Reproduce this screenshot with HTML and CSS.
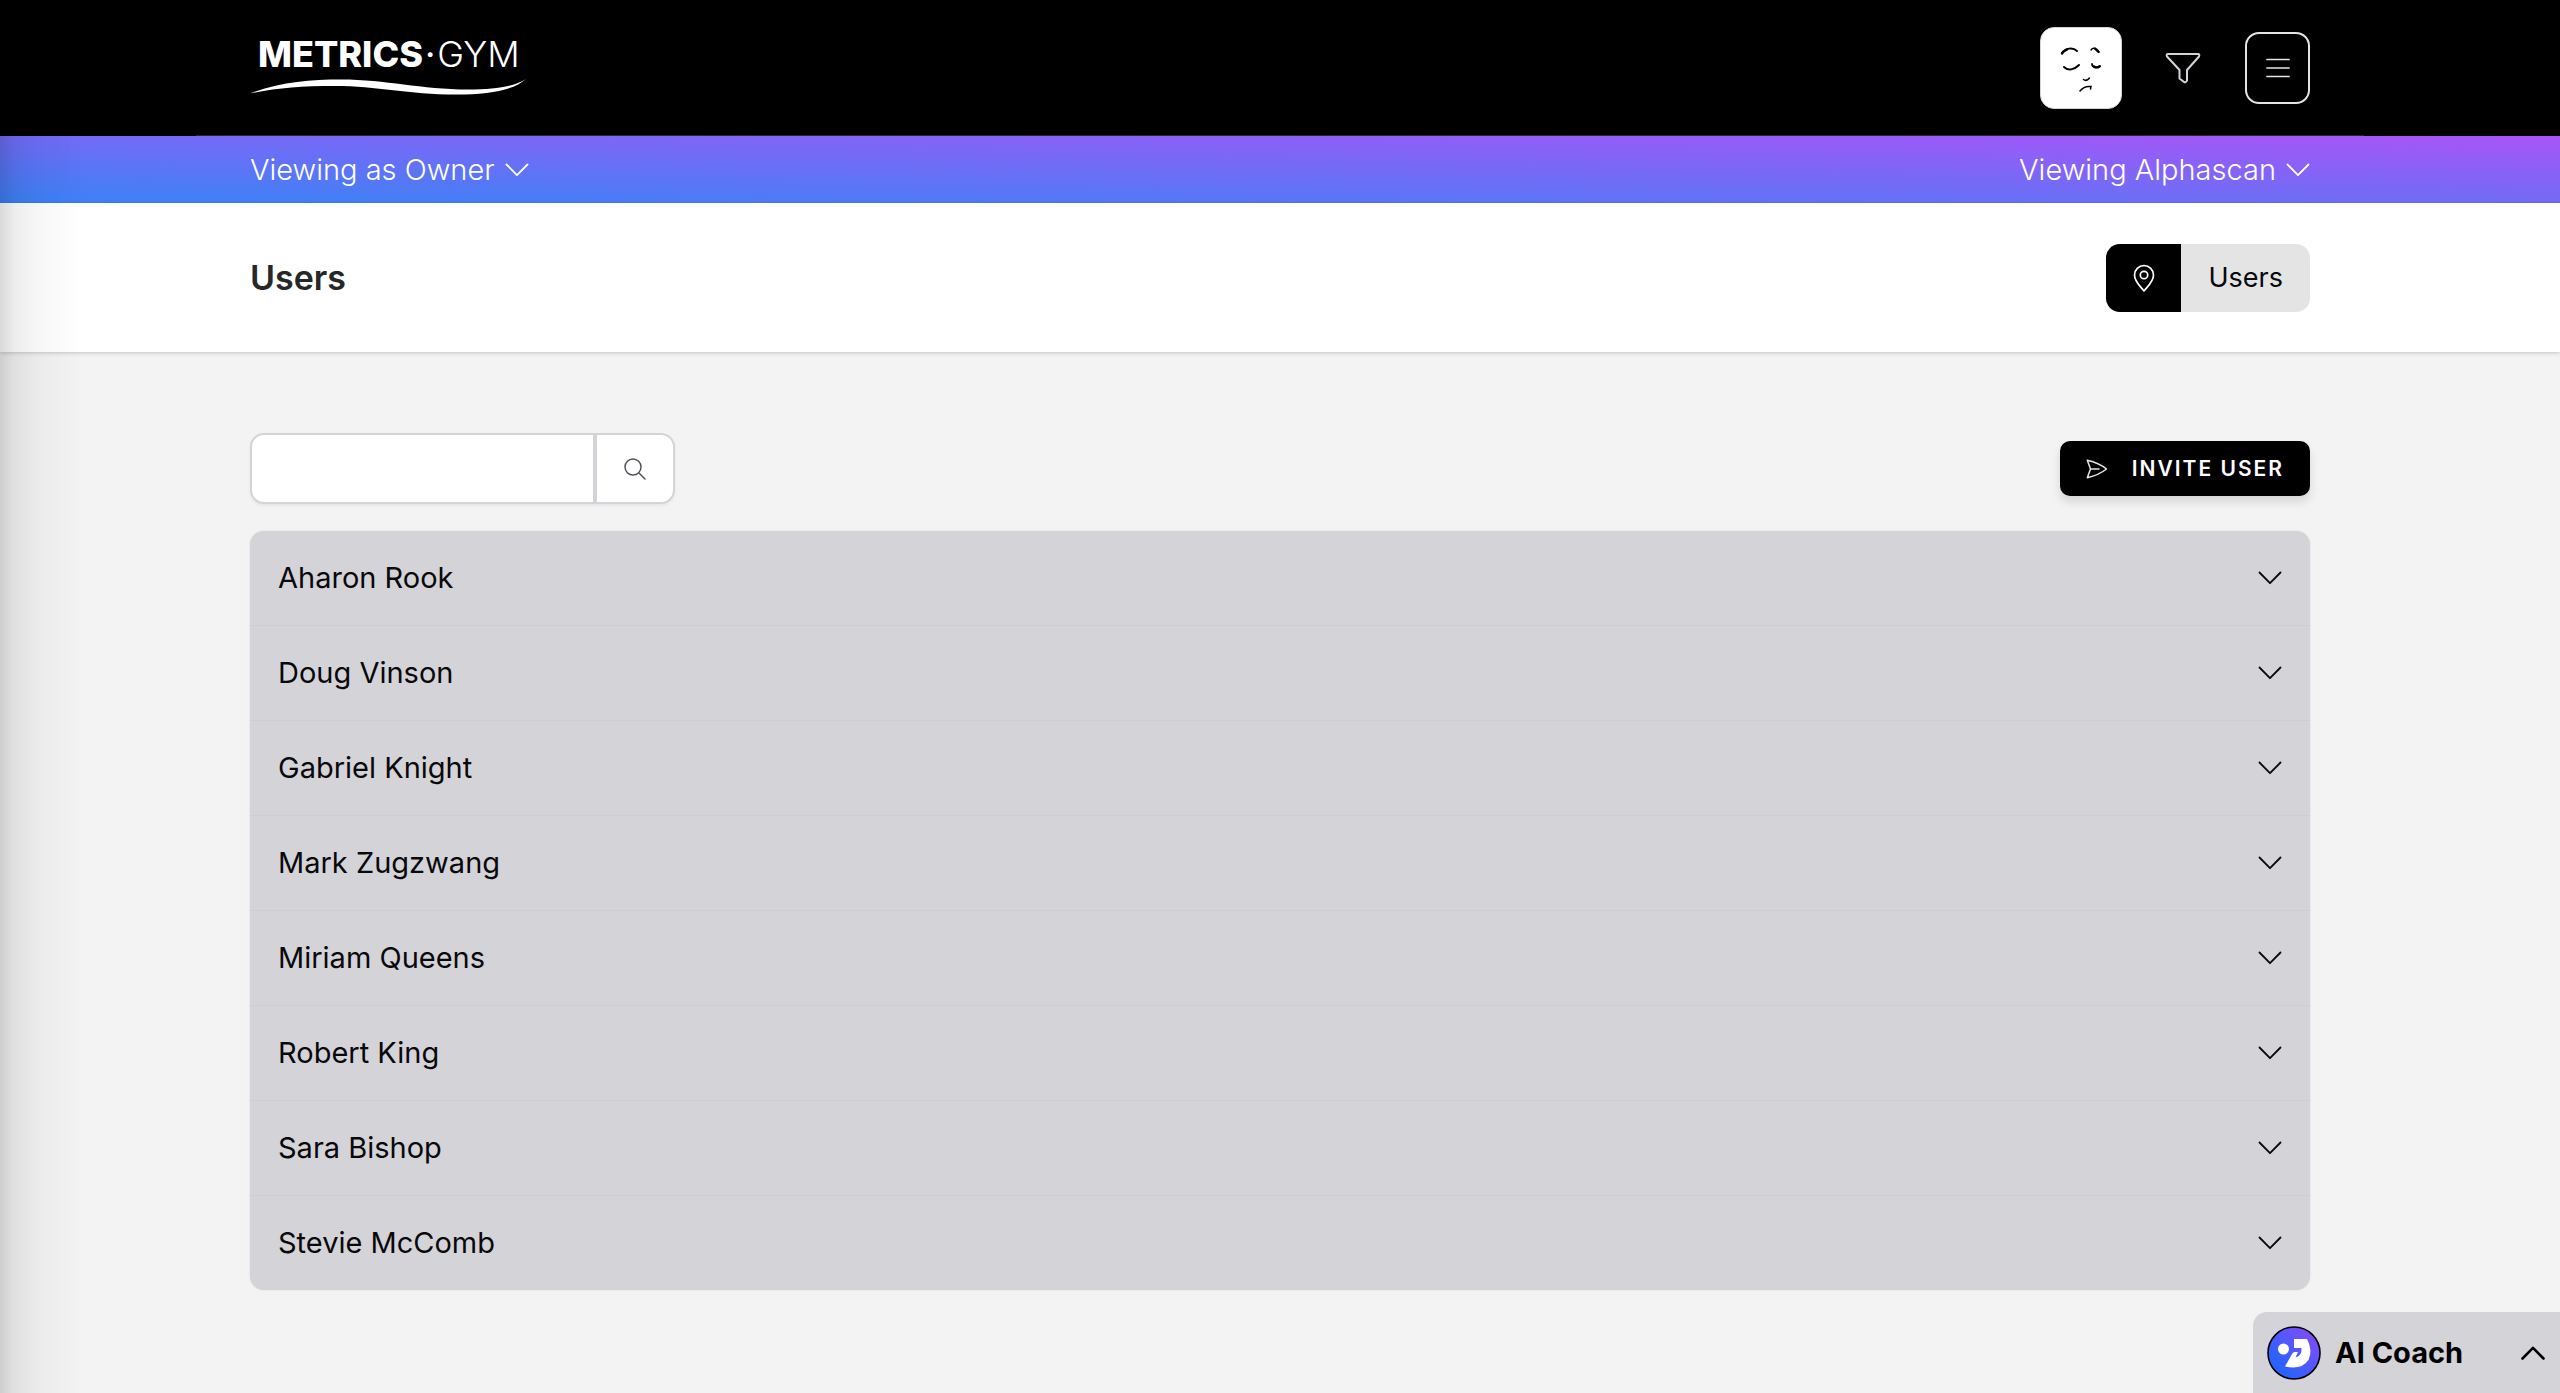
FILE: index.html
```html
<!DOCTYPE html>
<html lang="en">
<head>
<meta charset="utf-8">
<meta name="viewport" content="width=device-width, initial-scale=1">
<title>Users</title>
<link rel="stylesheet" href="styles.css">
</head>
<body>
<svg class="defs" width="0" height="0" aria-hidden="true">
  <symbol id="chevron" viewBox="0 0 24 14"><path d="M1.5 1.5 12 12.2 22.5 1.5" fill="none" stroke="currentColor" stroke-linecap="round" stroke-linejoin="round"/></symbol>
</svg>
<header class="topbar">
  <nav class="container nav" aria-label="Main">
    <a class="logo" href="#">
      <span class="logo-text"><b>METRICS</b><span class="logo-dot">·</span><span class="logo-gym">GYM</span></span>
      <svg class="swoosh" viewBox="0 0 276 18" aria-hidden="true"><path d="M0 15.500C30 4 60 1.500 91 1.500c45 0 80 10 127 10 28 0 46-3 58-10.500-12 11-36 15.500-70 15.500C158 16.500 127 8 85 8 50 8 27 10 0 15.500Z" fill="#fff"/></svg>
    </a>
    <div class="nav-actions">
      <button class="avatar" type="button" aria-label="Profile">
        <svg viewBox="0 0 80 80" fill="none" stroke="#000" stroke-linecap="round" aria-hidden="true">
          <path d="M21 25c3-5 11-6 15-2" stroke-width="1.8"/><path d="M21 25.500c1-2 3-3 5-4" stroke-width="2.400"/>
          <path d="M50 22c2-3 6-2 8 2" stroke-width="1.4"/><path d="M54 20.500 57.500 24" stroke-width="2.200"/>
          <path d="M23 39c4 4 10 3 15-2" stroke-width="2"/><path d="M51 36c0 4 6 4 8 2" stroke-width="1.800"/><path d="M53 38.500c2 1.500 4 1 5.500 0" stroke-width="2.200"/>
          <path d="M42.500 51.500c2 1.500 4 1 6-1.500" stroke-width="1.500"/>
          <path d="M39 63c3-4 7-5 11-4.500l-.5 2.500" stroke-width="1.500"/>
        </svg>
      </button>
      <button class="filter" type="button" aria-label="Filter">
        <svg viewBox="0 0 36 32" fill="none" stroke="#d4d4d8" stroke-width="2" stroke-linejoin="round" aria-hidden="true"><path d="M3 2H33Q35 2 34 4.500L22 18V28.500Q21 31 19 30L14.500 26.500V18L2 4.500Q1 2 3 2Z"/></svg>
      </button>
      <button class="menu" type="button" aria-label="Menu">
        <svg viewBox="0 0 24 20" stroke="#e4e4e7" stroke-width="1.700" stroke-linecap="round" aria-hidden="true"><path d="M1 1.500H23M1 10H23M1 18.500H23"/></svg>
      </button>
    </div>
  </nav>
</header>
<div class="context">
  <div class="container context-row">
    <button class="switcher" type="button">Viewing as Owner <svg class="chev" aria-hidden="true"><use href="#chevron"/></svg></button>
    <button class="switcher" type="button">Viewing Alphascan <svg class="chev" aria-hidden="true"><use href="#chevron"/></svg></button>
  </div>
</div>
<div class="page-head">
  <div class="container page-head-row">
    <h1>Users</h1>
    <nav class="crumbs" aria-label="Breadcrumb">
      <span class="pin"><svg viewBox="0 0 22 28" fill="none" stroke="#fff" stroke-width="1.700" stroke-linejoin="round" aria-hidden="true"><circle cx="11" cy="11" r="3.700"/><path d="M20.500 11C20.500 17.500 15 22 11 27 7 22 1.500 17.500 1.500 11a9.500 9.500 0 0 1 19 0Z"/></svg></span>
      <a href="#">Users</a>
    </nav>
  </div>
</div>
<main class="container">
  <div class="tools">
    <form class="search" role="search">
      <input type="search" aria-label="Search users">
      <button type="button" aria-label="Search"><svg viewBox="0 0 22 22" fill="none" stroke="#52525b" stroke-width="1.500" stroke-linecap="round" aria-hidden="true"><circle cx="9" cy="9" r="8"/><path d="m15 15 6 6"/></svg></button>
    </form>
    <button class="invite" type="button"><svg viewBox="0 0 22 20" fill="none" stroke="#e4e4e7" stroke-width="1.500" stroke-linejoin="round" stroke-linecap="round" aria-hidden="true"><path d="M4.500 10 1.300 1.300Q13 4 20.500 10 13 16 1.300 18.700L4.500 10H13"/></svg>INVITE USER</button>
  </div>
  <ul class="users">
    <li><button type="button">Aharon Rook <svg class="chev" aria-hidden="true"><use href="#chevron"/></svg></button></li>
    <li><button type="button">Doug Vinson <svg class="chev" aria-hidden="true"><use href="#chevron"/></svg></button></li>
    <li><button type="button">Gabriel Knight <svg class="chev" aria-hidden="true"><use href="#chevron"/></svg></button></li>
    <li><button type="button">Mark Zugzwang <svg class="chev" aria-hidden="true"><use href="#chevron"/></svg></button></li>
    <li><button type="button">Miriam Queens <svg class="chev" aria-hidden="true"><use href="#chevron"/></svg></button></li>
    <li><button type="button">Robert King <svg class="chev" aria-hidden="true"><use href="#chevron"/></svg></button></li>
    <li><button type="button">Sara Bishop <svg class="chev" aria-hidden="true"><use href="#chevron"/></svg></button></li>
    <li><button type="button">Stevie McComb <svg class="chev" aria-hidden="true"><use href="#chevron"/></svg></button></li>
  </ul>
</main>
<button class="coach" type="button">
  <svg class="coach-logo" viewBox="0 0 54 54" aria-hidden="true">
    <defs><linearGradient id="cg" x1="0" y1="1" x2="1" y2="0"><stop offset=".2" stop-color="#2563ff"/><stop offset=".85" stop-color="#7c4dff"/></linearGradient></defs>
    <circle cx="27" cy="27" r="26" fill="url(#cg)" stroke="#000" stroke-width="1.600"/>
    <circle cx="16.500" cy="23" r="5.500" fill="#fff"/>
    <path d="M27 13H40Q46 24 41.500 34 35 44 18 40.500L25 28 27 26H31L28.500 31.500Q35 30 34.500 22H27Z" fill="#fff"/>
  </svg>
  <span>AI Coach</span>
  <svg class="chev up" aria-hidden="true"><use href="#chevron"/></svg>
</button>
<div class="drawer-edge" aria-hidden="true"></div>
</body>
</html>
```
FILE: styles.css
```css
*, *::before, *::after { box-sizing: border-box; }

body {
  margin: 0;
  min-height: 100vh;
  background: #f3f3f3;
  color: #09090b;
  font: 400 29px/40px Inter, "Noto Sans", sans-serif;
}

button, input {
  margin: 0;
  padding: 0;
  border: 0;
  background: none;
  color: inherit;
  font: inherit;
}

button { cursor: pointer; }
svg { display: block; flex: none; }
.defs { position: absolute; }

.container {
  width: 100%;
  max-width: 2168px;
  margin: 0 auto;
  padding: 0 54px;
}

.chev { width: 24px; height: 14px; stroke-width: 1.8px; }
.up { transform: rotate(180deg); stroke-width: 2.6px; }

/* Top bar */
.topbar { background: #000; }

.nav {
  display: flex;
  align-items: center;
  justify-content: space-between;
  height: 136px;
  border-bottom: 1px solid #27272a;
  box-shadow: 0 5px 10px rgba(0, 0, 0, .2);
}

.logo { padding-bottom: 6px; color: #fff; text-decoration: none; }
.logo-text { display: flex; padding-left: 8px; font-size: 36px; line-height: 42px; }
.logo b { font-weight: 800; }
.logo-dot { padding: 0 2px; font-weight: 400; }
.logo-gym { font-weight: 300; }
.swoosh { width: 276px; height: 18px; margin-top: 3px; }

.nav-actions { display: flex; align-items: center; }
.avatar { width: 82px; height: 82px; border: 1px solid #d4d4d8; border-radius: 14px; background: #fff; }
.filter { margin: 0 44px 0 43px; }
.filter svg { width: 36px; height: 32px; }
.menu {
  display: grid;
  place-items: center;
  width: 65px;
  height: 72px;
  border: 2px solid #e4e4e7;
  border-radius: 14px;
}
.menu svg { width: 24px; height: 20px; }

/* Role and gym switchers */
.context { background: linear-gradient(to top right, #3b82f6, #a855f7); }
.context-row { display: flex; justify-content: space-between; align-items: center; height: 67px; }
.switcher { display: flex; align-items: center; gap: 10px; color: #fff; font-weight: 300; }

/* Page heading */
.page-head { position: relative; background: #fff; box-shadow: 0 1px 4px rgba(0, 0, 0, .2); }
.page-head-row { display: flex; align-items: center; justify-content: space-between; height: 149px; }
h1 { margin: 0; color: #27272a; font-size: 34px; font-weight: 600; }
.crumbs { display: flex; height: 68px; border-radius: 14px; overflow: hidden; background: #e4e4e5; }
.pin { display: grid; place-items: center; width: 75px; background: #000; }
.pin svg { width: 22px; height: 28px; }
.crumbs a { padding: 14px 27px; color: inherit; font-size: 27px; text-decoration: none; }

/* Search and invite */
.tools {
  display: flex;
  align-items: center;
  justify-content: space-between;
  padding: 81px 0 27px;
}
.search {
  display: flex;
  width: 425px;
  height: 71px;
  border: 2px solid #d4d4d8;
  border-radius: 14px;
  background: #fff;
  box-shadow: 0 2px 3px rgba(0, 0, 0, .05);
}
.search input { flex: 1; min-width: 0; padding: 0 20px; outline: 0; }
.search button {
  display: grid;
  place-items: center;
  width: 80px;
  border-left: 4px solid #d4d4d8;
}
.search svg { width: 22px; height: 22px; }
.invite {
  display: flex;
  align-items: center;
  gap: 24px;
  height: 55px;
  padding: 0 26px;
  border-radius: 10px;
  background: #000;
  color: #fff;
  font-size: 21px;
  font-weight: 600;
  letter-spacing: 2px;
  box-shadow: 0 6px 10px rgba(0, 0, 0, .12);
}
.invite svg { width: 22px; height: 20px; }

/* User accordion */
.users {
  margin: 0 0 54px;
  padding: 0;
  border-radius: 14px;
  background: #d4d3d8;
  box-shadow: 0 0 2px rgba(0, 0, 0, .12);
  list-style: none;
}
.users li + li { border-top: 1px solid #cecdd3; }
.users button {
  display: flex;
  align-items: center;
  justify-content: space-between;
  width: 100%;
  height: 94px;
  padding: 0 28px;
}

/* Docked coach panel */
.coach {
  position: fixed;
  right: 0;
  bottom: 0;
  display: flex;
  align-items: center;
  width: 307px;
  height: 81px;
  padding: 0 15px 0 14px;
  border-radius: 14px 0 0 0;
  background: #d4d3d8;
  color: #000;
  font-weight: 700;
}
.coach-logo { width: 54px; height: 54px; margin-right: 14px; }
.coach .up { margin-left: auto; }

.drawer-edge {
  position: fixed;
  inset: 0 auto 0 0;
  width: 84px;
  background: linear-gradient(to right, rgba(0, 0, 0, .15), rgba(0, 0, 0, .07) 18%, rgba(0, 0, 0, .03) 45%, transparent);
  pointer-events: none;
}
```
